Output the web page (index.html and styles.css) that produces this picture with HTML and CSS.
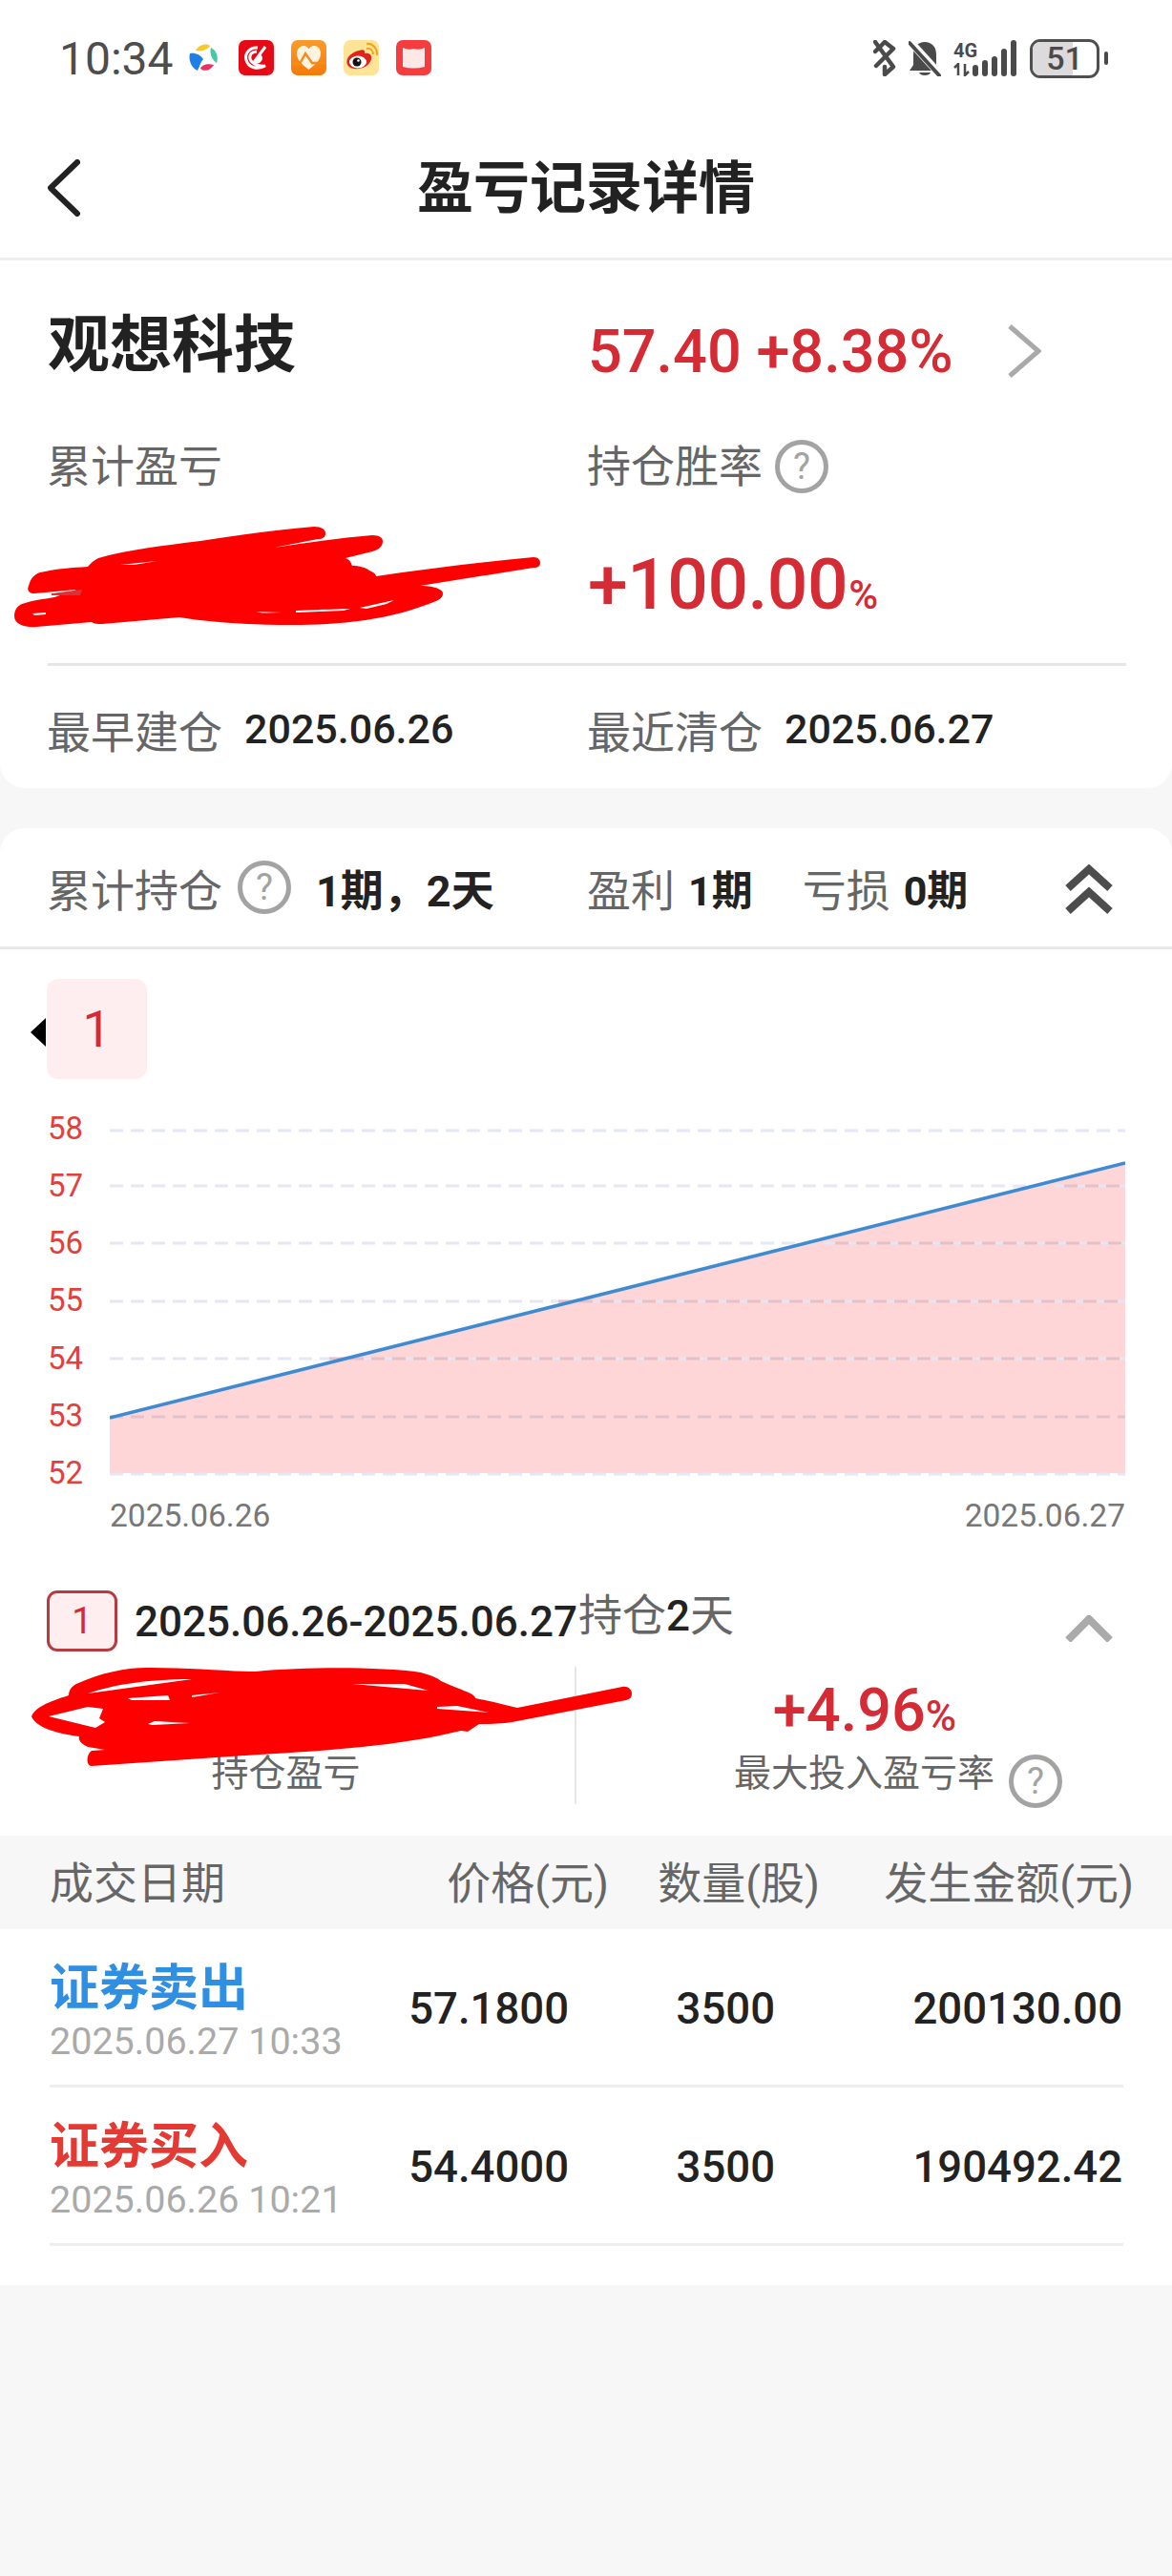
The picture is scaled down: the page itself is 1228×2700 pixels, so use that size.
FILE: index.html
```html
<!DOCTYPE html>
<html lang="zh-CN">
<head>
  <meta charset="UTF-8">
  <title>盈亏记录详情</title>
  <link rel="stylesheet" href="styles.css">
</head>
<body>
  <div class="statusbar">
    <span class="time">10:34</span>
    <div class="apps">
      <svg class="app app-round" viewBox="0 0 30 30">
        <path d="M7 8 C10 2 18 0 22 3 C20 7 14 9 7 8Z" fill="#f7c92c"/>
        <path d="M23 5 C29 8 31 15 29 21 C25 19 21 12 23 5Z" fill="#45c9a5"/>
        <path d="M1 11 C6 10 12 12 15 17 C12 20 11 25 9 29 C3 27 -1 18 1 11Z" fill="#1f7fe8"/>
        <path d="M12 27 C13 23 20 21 26 23 C23 28 17 31 12 27Z" fill="#ea2f62"/>
      </svg>
      <svg class="app" viewBox="0 0 37 37">
        <rect width="37" height="37" rx="7" fill="#e60a17"/>
        <path d="M28 7 L17 22 M20 8 C12 7 6 14 8 21 C10 28 19 32 28 27 C21 28 14 25 12 20 C11 15 14 12 19 12" fill="none" stroke="#fff" stroke-width="3"/>
        <path d="M22 14 C26 17 26 21 22 24 C19 25 16 24 15 21 C18 22 22 19 22 14Z" fill="#fff"/>
      </svg>
      <svg class="app" viewBox="0 0 37 37">
        <defs><linearGradient id="orange" x1="0" y1="0" x2="0" y2="1"><stop offset="0" stop-color="#fb9b2c"/><stop offset="1" stop-color="#f57a08"/></linearGradient></defs>
        <rect width="37" height="37" rx="7" fill="url(#orange)"/>
        <path d="M18.5 31 C12 26 6 21 6 14 C6 9 10 6 13 6 C15.500 6 17.500 7.500 18.500 9.500 C19.500 7.500 21.500 6 24 6 C28 6 31 9 31 14 C31 21 25 26 18.500 31Z" fill="#fff3e2"/>
        <path d="M0 25 L9 25 L15 14 L22 24 L37 24" fill="none" stroke="#f98a12" stroke-width="2.500"/>
      </svg>
      <svg class="app" viewBox="0 0 37 37">
        <rect width="37" height="37" rx="7" fill="#ffe396"/>
        <path d="M16 11 C21 9 23 11 22 14 C27 13 30 16 29 20 C27 28 18 31 11 30 C5 29 2 25 4 20 C5 16 11 12 16 11Z" fill="#e0241c"/>
        <ellipse cx="15" cy="23" rx="9" ry="6.500" fill="#fff"/>
        <circle cx="14" cy="23" r="4.500" fill="#111"/>
        <circle cx="15.500" cy="21.500" r="1.300" fill="#fff"/>
        <path d="M24 9 C28 8 31 11 31 15 M24 4 C30 3 36 9 35 16" fill="none" stroke="#f4a21b" stroke-width="2"/>
      </svg>
      <svg class="app" viewBox="0 0 37 37">
        <rect width="37" height="37" rx="7" fill="#f53c3f"/>
        <path d="M7 8 Q13 11 18.500 9 Q25 11 30 8 L30 28 Q18 31 7 28Z" fill="#fde8e6"/>
      </svg>
    </div>
    <div class="sys">
      <svg class="sys-bt" viewBox="0 0 24 38" fill="none" stroke="#4a4a4a" stroke-width="4.500" stroke-linecap="round" stroke-linejoin="round">
        <path d="M2 12 L12 2 L21 9 L13 17 L3 27"/>
        <path d="M2 2 L21 28 L12 36 L12 28"/>
      </svg>
      <svg class="sys-bell" viewBox="0 0 34 38">
        <path d="M1 32 L5 26 L5 15 C5 7 10 2 17 2 C24 2 29 7 29 15 L29 26 L33 32Z M11 34 L23 34 C22 38 12 38 11 34Z" fill="#4a4a4a"/>
        <path d="M2 2 L32 35" stroke="#fff" stroke-width="8"/>
        <path d="M1 3 L32 37" stroke="#4a4a4a" stroke-width="4" stroke-linecap="round"/>
      </svg>
      <div class="net">
        <span class="net-4g">4G</span>
        <svg class="net-arrows" viewBox="0 0 18 14" fill="none" stroke="#4a4a4a" stroke-width="2.500">
          <path d="M1 5 L5 1 L5 13 M12 1 L12 13 L16 9"/>
        </svg>
      </div>
      <div class="bars">
        <i class="bar bar1"></i><i class="bar bar2"></i><i class="bar bar3"></i><i class="bar bar4"></i><i class="bar bar5"></i>
      </div>
      <div class="battery"><span class="battery-fill"></span><span class="battery-num">51</span></div>
      <span class="battery-nub"></span>
    </div>
  </div>

  <div class="navbar">
    <svg class="nav-back" viewBox="0 0 34 60" fill="none" stroke="#222" stroke-width="6" stroke-linecap="round" stroke-linejoin="round">
      <path d="M31 3 L3 30 L31 57"/>
    </svg>
    <h1>盈亏记录详情</h1>
  </div>

  <section class="card summary">
    <div class="summary-grid">
      <h2 class="stock-name">观想科技</h2>
      <div class="quote">
        <span>57.40 +8.38%</span>
        <svg class="quote-arrow" viewBox="0 0 36 56" fill="none" stroke="#a9a9a9" stroke-width="5">
          <path d="M3 2 L33 28 L3 54"/>
        </svg>
      </div>
      <div class="label">累计盈亏</div>
      <div class="label">持仓胜率 <span class="help">?</span></div>
      <div class="value-hidden"></div>
      <div class="rate">+100.00<small>%</small></div>
    </div>
    <svg class="scribble scribble-top" viewBox="0 0 600 130">
      <path d="M15 106 C15 98 19 95 23 93 C35 89 45 88 57 86 L80 78 L36 82 C30 82 28 78 30 74 C32 66 36 62 42 60 C60 56 75 55 92 54 C95 50 99 47 103 45 C135 36 170 32 210 27 C250 21 290 15 329 12 C337 12 341 15 341 19 C341 23 338 25 333 25 L287 34 C320 29 355 24 390 21 C398 21 401 24 401 27 C401 33 397 36 390 38 L362 45 C367 47 368 50 369 53 C376 53 384 55 387 58 C392 60 394 62 394 64 C450 56 505 49 559 44 C564 44 566 47 566 50 C566 53 564 55 559 55 L440 74 C448 74 455 75 459 77 C463 79 464 80 464 82 C464 86 461 88 457 90 C435 99 410 106 383 110 C355 114 330 115 306 115 C265 115 225 113 188 107 L107 114 C102 114 99 114 96 112 L38 117 C28 118 15 115 15 106Z" fill="#f00"/>
      <path d="M54 82 L86 78 L84 84 L54 84Z M335 98 L342 98 L342 101 L335 101Z" fill="#d6343b"/>
      <path d="M34 103 L48 102 L48 104 L36 105Z M268 101 L295 102 L275 102.500Z M310 100 L367 98 L360 100 L310 102Z M377 97 L413 89 L405 93 L384 98Z M126 52 L165 48 L140 52Z" fill="#fff"/>
    </svg>
    <div class="dates">
      <div class="date-item"><span class="date-label">最早建仓</span><b>2025.06.26</b></div>
      <div class="date-item"><span class="date-label">最近清仓</span><b>2025.06.27</b></div>
    </div>
  </section>

  <section class="card holdings">
    <div class="hold-head">
      <div class="hold-left">
        <span class="date-label">累计持仓</span>
        <span class="help">?</span>
        <b>1期，2天</b>
      </div>
      <div class="hold-right">
        <span class="date-label">盈利</span><b>1期</b>
        <span class="date-label loss">亏损</span><b>0期</b>
      </div>
      <svg class="double-up" viewBox="0 0 50 52" fill="none" stroke="#4d4d4d" stroke-width="8" stroke-linejoin="miter">
        <path d="M3 25 L25 5 L47 25"/>
        <path d="M3 49 L25 29 L47 49"/>
      </svg>
    </div>

    <div class="period-tabs">
      <span class="tab-arrow"></span>
      <span class="tab-item">1</span>
    </div>

    <div class="chart">
      <div class="y-axis">
        <span>58</span><span>57</span><span>56</span><span>55</span><span>54</span><span>53</span><span>52</span>
      </div>
      <svg class="plot" viewBox="0 0 1064 364" preserveAspectRatio="none">
        <path d="M0 303 L1064 36 L1064 361 L0 361Z" fill="#ffd6d8"/>
        <g stroke="#e4e6f5" stroke-width="3" stroke-dasharray="14 8" opacity="0.95">
          <path d="M0 2 H1064"/>
          <path d="M0 60 H1064"/>
          <path d="M0 120 H1064"/>
          <path d="M0 181 H1064"/>
          <path d="M0 241 H1064"/>
          <path d="M0 302 H1064"/>
          <path d="M0 362 H1064"/>
        </g>
        <g stroke="#e5c0c6" stroke-width="3" stroke-dasharray="14 8">
          <path d="M1000 60 H1064"/>
          <path d="M760 120 H1064"/>
          <path d="M470 181 H1064"/>
          <path d="M230 241 H1064"/>
          <path d="M0 302 H1064"/>
        </g>
        <path d="M0 303 L1064 36" fill="none" stroke="#3f8bd2" stroke-width="3.500"/>
      </svg>
      <div class="x-axis"><span>2025.06.26</span><span>2025.06.27</span></div>
    </div>

    <div class="period">
      <div class="period-head">
        <span class="period-no">1</span>
        <b class="period-range">2025.06.26-2025.06.27</b>
        <span class="period-days">持仓<b>2</b>天</span>
        <svg class="single-up" viewBox="0 0 50 28" fill="none" stroke="#aaa" stroke-width="8">
          <path d="M3 26 L25 4 L47 26"/>
        </svg>
      </div>
      <div class="period-stats">
        <div class="stat stat-left">
          <div class="stat-value"></div>
          <div class="stat-label">持仓盈亏</div>
        </div>
        <div class="stat stat-right">
          <div class="stat-value rise">+4.96<small>%</small></div>
          <div class="stat-label">最大投入盈亏率<span class="help">?</span></div>
        </div>
      </div>
    </div>
    <svg class="scribble scribble-bottom" viewBox="0 0 660 130">
      <path d="M13 64 C18 52 40 46 52 42 C52 36 56 32 60 30 C85 18 115 12 139 13 C180 13 220 17 248 17 C300 12 380 12 421 18 C435 22 440 25 442 27 C455 33 465 36 473 40 C477 42 478 44 478 45 C495 48 510 52 522 55 L632 33 C638 32 642 36 642 40 C642 44 640 46 636 47 L527 68 C510 72 490 72 482 72 L470 80 L463 79 C400 95 320 100 252 104 L76 116 C70 116 70 104 76 100 L90 99 L72 96 C63 92 62 87 63 85 C40 82 18 76 13 64Z" fill="#f00"/>
      <path d="M31 64 L72 54 L88 56 L84 66 L90 70 L80 76Z M72 40 C100 30 140 25 181 25Z M114 45 L156 42 L158 47 L118 47Z M181 42 L210 39 L181 44Z M349 30 L404 30 L429 37Z M438 54 L459 53 L492 60 L438 56Z M135 72 L142 69 L179 71 L140 73Z" fill="#fff"/>
    </svg>
  </section>

  <section class="trades">
    <div class="trade-head">
      <span class="col-date">成交日期</span>
      <span class="col-price">价格(元)</span>
      <span class="col-qty">数量(股)</span>
      <span class="col-amount">发生金额(元)</span>
    </div>
    <div class="trade-list">
      <div class="trade-row">
        <div class="col-date">
          <div class="trade-type sell">证券卖出</div>
          <div class="trade-time">2025.06.27 10:33</div>
        </div>
        <span class="col-price">57.1800</span>
        <span class="col-qty">3500</span>
        <span class="col-amount">200130.00</span>
      </div>
      <div class="trade-row">
        <div class="col-date">
          <div class="trade-type buy">证券买入</div>
          <div class="trade-time">2025.06.26 10:21</div>
        </div>
        <span class="col-price">54.4000</span>
        <span class="col-qty">3500</span>
        <span class="col-amount">190492.42</span>
      </div>
    </div>
  </section>
</body>
</html>
```

FILE: styles.css
```css
* {
  box-sizing: border-box;
}

body {
  margin: 0;
  height: 2700px;
  overflow: hidden;
  background: #f7f7f7;
  font-family: Roboto, 'Noto Sans CJK SC', sans-serif;
  color: #222;
}

h1, h2 {
  margin: 0;
}

b {
  font-weight: 500;
}

/* status bar */
.statusbar {
  height: 124px;
  background: #fff;
  display: flex;
  align-items: flex-start;
  padding: 40px 67px 0 62px;
}

.time {
  font-size: 48px;
  line-height: 44px;
  color: #4d4d4d;
  width: 136px;
}

.apps {
  display: flex;
  align-items: center;
  gap: 18px;
  height: 40px;
}

.app {
  width: 37px;
  height: 37px;
}

.app-round {
  width: 30px;
  height: 30px;
  margin-right: 4px;
}

.sys {
  margin-left: auto;
  display: flex;
  align-items: center;
  height: 42px;
}

.sys-bt {
  width: 24px;
  height: 38px;
  margin-right: 13px;
}

.sys-bell {
  width: 34px;
  height: 38px;
  margin-right: 13px;
}

.net {
  width: 30px;
  display: flex;
  flex-direction: column;
}

.net-4g {
  font-size: 20px;
  line-height: 20px;
  font-weight: 700;
  color: #4a4a4a;
}

.net-arrows {
  width: 18px;
  height: 14px;
  margin-top: 3px;
}

.bars {
  display: flex;
  align-items: flex-end;
  gap: 4px;
  height: 38px;
  margin-left: -10px;
  margin-right: 14px;
}

.bar {
  width: 6px;
  border-radius: 3px;
  background: #4a4a4a;
}

.bar1 { height: 12px; }
.bar2 { height: 17px; }
.bar3 { height: 21px; }
.bar4 { height: 29px; }
.bar5 { height: 38px; }

.battery {
  position: relative;
  width: 73px;
  height: 41px;
  border: 3px solid #4f4f4f;
  border-radius: 11px;
  overflow: hidden;
  text-align: center;
}

.battery-fill {
  position: absolute;
  left: 0;
  top: 0;
  bottom: 0;
  width: 42px;
  background: #dcdadd;
}

.battery-num {
  position: relative;
  font-size: 34px;
  line-height: 35px;
  font-weight: 500;
  color: #4a4a4a;
}

.battery-nub {
  width: 4px;
  height: 14px;
  margin-left: 5px;
  border-radius: 2px;
  background: #4a4a4a;
}

/* nav */
.navbar {
  position: relative;
  height: 149px;
  background: #fff;
  border-bottom: 3px solid #eee;
  display: flex;
  align-items: center;
  justify-content: center;
}

.navbar h1 {
  font-size: 59px;
  font-weight: 700;
  color: #222;
  line-height: 72px;
  font-family: 'Noto Sans CJK SC', sans-serif;
  margin-bottom: 9px;
}

.nav-back {
  position: absolute;
  left: 50px;
  top: 43px;
  width: 34px;
  height: 60px;
}

/* cards */
.card {
  position: relative;
  background: #fff;
}

.summary {
  height: 553px;
  border-radius: 0 0 26px 26px;
  padding: 0 48px 0 50px;
}

.summary-grid {
  display: grid;
  grid-template-columns: 566px 1fr;
  grid-template-rows: 180px 72px 170px;
  height: 425px;
  border-bottom: 3px solid #e6e6e6;
}

.stock-name {
  font-size: 65px;
  font-weight: 700;
  line-height: 166px;
  font-family: 'Noto Sans CJK SC', sans-serif;
  color: #222;
}

.quote {
  display: flex;
  align-items: center;
  font-size: 63px;
  color: #d42b34;
  font-weight: 500;
  padding-top: 10px;
}

.quote-arrow {
  width: 36px;
  height: 56px;
  margin-left: 56px;
}

.label {
  display: flex;
  align-items: center;
  font-size: 46px;
  line-height: 72px;
  color: #666;
  gap: 13px;
  margin-left: -1px;
}

.help {
  display: inline-flex;
  align-items: center;
  justify-content: center;
  width: 56px;
  height: 56px;
  border: 5px solid #a3a3a3;
  border-radius: 50%;
  font-size: 38px;
  color: #a3a3a3;
  flex: none;
}

.rate {
  font-size: 75px;
  line-height: 166px;
  padding-top: 4px;
  color: #d42b34;
  font-weight: 500;
  letter-spacing: -0.5px;
}

.rate small {
  font-size: 42px;
  margin-left: 1px;
}

.scribble {
  position: absolute;
  pointer-events: none;
}

.scribble-top {
  left: 0;
  top: 267px;
  width: 600px;
  height: 130px;
}

.dates {
  display: grid;
  grid-template-columns: 566px 1fr;
  height: 128px;
  padding-top: 3px;
  align-items: center;
}

.date-item {
  display: flex;
  align-items: center;
  gap: 23px;
  font-size: 43px;
}

.date-label {
  font-size: 46px;
  color: #666;
  margin-left: -1px;
}

/* holdings */
.holdings {
  margin-top: 42px;
  height: 1056px;
  border-radius: 26px 26px 0 0;
}

.hold-head {
  height: 127px;
  border-bottom: 3px solid #e9e9e9;
  display: flex;
  align-items: center;
  padding-left: 50px;
  position: relative;
}

.hold-head b {
  font-size: 45px;
  font-weight: 700;
  color: #222;
}

.hold-left {
  width: 566px;
  display: flex;
  align-items: center;
  gap: 16px;
}

.hold-left b {
  margin-left: 10px;
}

.hold-right {
  display: flex;
  align-items: center;
  gap: 14px;
}

.hold-right b {
  font-size: 43px;
}

.hold-right .loss {
  margin-left: 38px;
}

.double-up {
  position: absolute;
  left: 1116px;
  top: 38px;
  width: 50px;
  height: 52px;
}

.period-tabs {
  display: flex;
  align-items: center;
  padding: 31px 0 0 32px;
  height: 136px;
}

.tab-arrow {
  width: 0;
  height: 0;
  border-style: solid;
  border-width: 15px 16px 15px 0;
  border-color: transparent #000 transparent transparent;
  margin-top: 6px;
}

.tab-item {
  width: 105px;
  height: 105px;
  margin-left: 1px;
  border-radius: 12px;
  background: #ffeef0;
  color: #d42b34;
  font-size: 54px;
  display: flex;
  align-items: center;
  justify-content: center;
}

/* chart */
.chart {
  display: grid;
  grid-template-columns: 65px 1064px;
  grid-template-rows: 364px auto;
  padding-left: 50px;
  margin-top: 52px;
}

.y-axis {
  display: flex;
  flex-direction: column;
  justify-content: space-between;
  font-size: 33px;
  color: #e2403b;
  line-height: 38px;
  margin: -19px 0 -16px;
}

.plot {
  width: 1064px;
  height: 364px;
}

.x-axis {
  grid-column: 2;
  display: flex;
  justify-content: space-between;
  font-size: 33.500px;
  line-height: 40px;
  margin-top: 22px;
  color: #777;
}

/* period detail */
.period {
  position: relative;
  margin-top: 58px;
  height: 255px;
}

.period-head {
  display: flex;
  align-items: flex-start;
  padding-left: 49px;
  height: 80px;
  position: relative;
}

.period-no {
  width: 74px;
  height: 64px;
  border: 3px solid #b73a40;
  border-radius: 11px;
  background: #ffeef0;
  color: #d42b34;
  font-size: 38px;
  display: flex;
  align-items: center;
  justify-content: center;
}

.period-range {
  font-size: 44px;
  line-height: 67px;
  margin-left: 18px;
  color: #222;
}

.period-days {
  font-size: 46px;
  line-height: 52px;
  color: #666;
  margin-left: 1px;
}

.period-days b {
  color: #222;
  font-size: 44px;
}

.single-up {
  position: absolute;
  left: 1116px;
  top: 26px;
  width: 50px;
  height: 28px;
}

.period-stats {
  display: flex;
  height: 144px;
}

.stat {
  text-align: center;
}

.stat-left {
  width: 604px;
  border-right: 2px solid #e6e6e6;
  padding-right: 3px;
}

.stat-right {
  flex: 1;
}

.stat-value {
  height: 88px;
  font-size: 63px;
  line-height: 92px;
  font-weight: 500;
}

.stat-value small {
  font-size: 44px;
}

.rise {
  color: #d42b34;
  padding-right: 20px;
}

.stat-label {
  font-size: 39px;
  line-height: 48px;
  color: #666;
  display: flex;
  align-items: flex-start;
  justify-content: center;
}

.stat-right .stat-label {
  justify-content: flex-start;
  padding-left: 165px;
}

.stat-right .help {
  margin-left: 15px;
  margin-top: 4px;
}

.scribble-bottom {
  left: 20px;
  top: 867px;
  width: 660px;
  height: 130px;
}

/* trades */
.trade-head,
.trade-row {
  display: grid;
  align-items: center;
  white-space: nowrap;
}

.trade-head {
  grid-template-columns: 400px 186px 221px 329px;
  height: 98px;
  padding-bottom: 6px;
  font-size: 46px;
  color: #666;
  padding-left: 52px;
}

.col-price,
.col-qty,
.col-amount {
  text-align: right;
}

.trade-list {
  background: #fff;
  height: 373px;
  padding-bottom: 42px;
}

.trade-row {
  grid-template-columns: 340px 204px 216px 364px;
  height: 166px;
  margin: 0 51px 0 52px;
  padding-top: 4px;
  border-bottom: 3px solid #eee;
  font-size: 45.500px;
  font-weight: 500;
}

.trade-type {
  font-size: 52px;
  line-height: 62px;
  font-weight: 700;
  font-family: 'Noto Sans CJK SC', sans-serif;
}

.sell {
  color: #2f8fe2;
}

.buy {
  color: #e53a33;
}

.trade-time {
  font-size: 39.500px;
  line-height: 46px;
  margin-top: 6px;
  font-weight: 400;
  color: #aaa;
}
```
